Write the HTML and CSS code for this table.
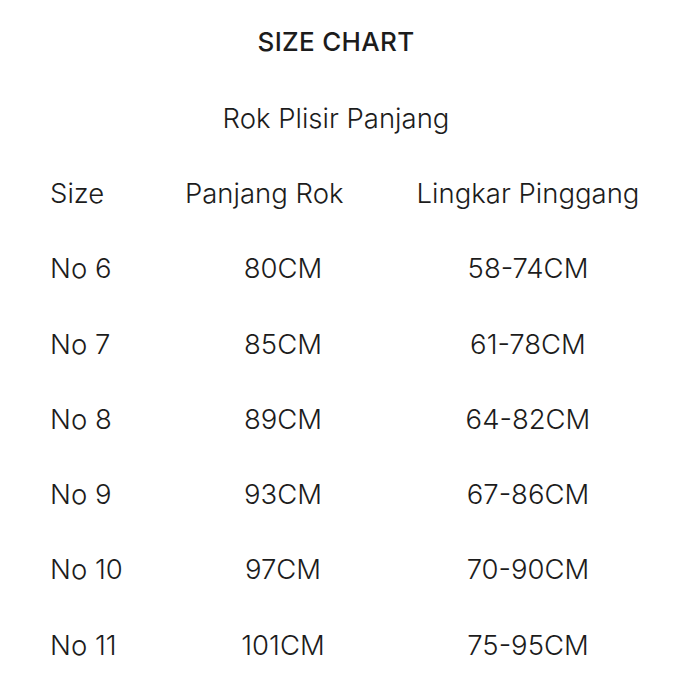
FILE: index.html
```html
<!DOCTYPE html>
<html>
<head>
<meta charset="utf-8">
<link rel="stylesheet" href="styles.css">
</head>
<body>
<div class="page">
  <h1 class="title">SIZE CHART</h1>
  <h2 class="subtitle">Rok Plisir Panjang</h2>
  <div class="chart">
    <div class="cell c1">Size</div><div class="cell c2 head">Panjang Rok</div><div class="cell c3">Lingkar Pinggang</div>
    <div class="cell c1">No 6</div><div class="cell c2">80CM</div><div class="cell c3">58-74CM</div>
    <div class="cell c1">No 7</div><div class="cell c2">85CM</div><div class="cell c3">61-78CM</div>
    <div class="cell c1">No 8</div><div class="cell c2">89CM</div><div class="cell c3">64-82CM</div>
    <div class="cell c1">No 9</div><div class="cell c2">93CM</div><div class="cell c3">67-86CM</div>
    <div class="cell c1">No 10</div><div class="cell c2">97CM</div><div class="cell c3">70-90CM</div>
    <div class="cell c1">No 11</div><div class="cell c2">101CM</div><div class="cell c3">75-95CM</div>
  </div>
</div>
</body>
</html>
```
FILE: styles.css
```css
html, body {
  margin: 0;
  padding: 0;
  background: #ffffff;
}
.page {
  width: 700px;
  height: 700px;
  box-sizing: border-box;
  font-family: Inter, "Noto Sans", sans-serif;
  color: #1c1c1c;
  display: flex;
  flex-direction: column;
  align-items: center;
}
.title {
  margin: 24px 28px 0 0;
  font-size: 26px;
  font-weight: 500;
  line-height: 36px;
  letter-spacing: 0.3px;
}
.subtitle {
  margin: 40px 28px 0 0;
  font-size: 27.5px;
  font-weight: 300;
  line-height: 36px;
}
.chart {
  margin-top: 39px;
  width: 700px;
  box-sizing: border-box;
  padding-left: 50px;
  display: grid;
  grid-template-columns: 120px 226px 264px;
  grid-auto-rows: 75.3px;
}
.cell {
  font-size: 27.5px;
  font-weight: 300;
  line-height: 36px;
  white-space: nowrap;
}
.c1 { text-align: left; }
.c2 { text-align: center; }
.c2.head { text-align: left; padding-left: 15px; }
.c3 { text-align: center; }
```
